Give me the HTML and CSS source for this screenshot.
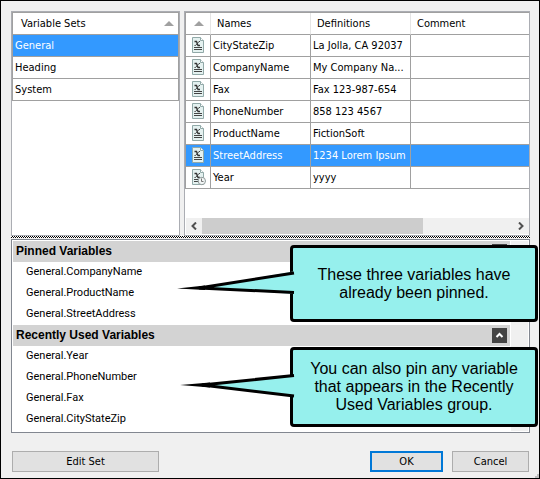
FILE: index.html
```html
<!DOCTYPE html>
<html lang="en">
<head>
<meta charset="utf-8">
<title>Variables</title>
<link rel="stylesheet" href="styles.css">
</head>
<body>
<svg class="symbols" aria-hidden="true">
  <symbol id="doc" viewBox="0 0 12 17">
    <path d="M.5.5h8l3 3v12H.5z" fill="#e4f1f0" stroke="#91a9a8"/>
    <path d="M8.500.5v3h3" fill="#fff" stroke="#91a9a8"/>
    <path d="M2.500 4.500h2l1.500 4h2" fill="none" stroke="#333" stroke-width="1.300"/>
    <path d="M8 4.500H7L3.500 8.500h-1" fill="none" stroke="#444"/>
    <path d="M2 10.500h8M2 12.500h8" stroke="#444"/>
  </symbol>
  <symbol id="doc-clock" viewBox="0 0 14 17">
    <use href="#doc" width="12" height="17"/>
    <circle cx="9.800" cy="12" r="3.700" fill="#f1f5f5" stroke="#8e9999"/>
    <path d="M9.500 9.500v3h2" fill="none" stroke="#777"/>
  </symbol>
</svg>
<main class="dialog">
  <div class="panes">
    <section class="pane">
      <table class="grid sets">
        <thead><tr><th><span class="sorted">Variable Sets <i class="sort"></i></span></th></tr></thead>
        <tbody>
          <tr class="selected"><td>General</td></tr>
          <tr><td>Heading</td></tr>
          <tr><td>System</td></tr>
        </tbody>
      </table>
    </section>
    <section class="pane">
      <table class="grid vars">
        <colgroup><col class="col-icon"><col class="col-text"><col class="col-text"><col></colgroup>
        <thead><tr><th class="icon-head"><i class="sort"></i></th><th>Names</th><th>Definitions</th><th>Comment</th></tr></thead>
        <tbody>
          <tr><td class="icon"><svg class="doc"><use href="#doc"/></svg></td><td>CityStateZip</td><td>La Jolla, CA 92037</td><td></td></tr>
          <tr><td class="icon"><svg class="doc"><use href="#doc"/></svg></td><td>CompanyName</td><td>My Company Na...</td><td></td></tr>
          <tr><td class="icon"><svg class="doc"><use href="#doc"/></svg></td><td>Fax</td><td>Fax 123-987-654</td><td></td></tr>
          <tr><td class="icon"><svg class="doc"><use href="#doc"/></svg></td><td>PhoneNumber</td><td>858 123 4567</td><td></td></tr>
          <tr><td class="icon"><svg class="doc"><use href="#doc"/></svg></td><td>ProductName</td><td>FictionSoft</td><td></td></tr>
          <tr class="selected"><td class="icon"><svg class="doc"><use href="#doc"/></svg></td><td>StreetAddress</td><td>1234 Lorem Ipsum</td><td></td></tr>
          <tr><td class="icon"><svg><use href="#doc-clock"/></svg></td><td>Year</td><td>yyyy</td><td></td></tr>
        </tbody>
      </table>
      <div class="hscroll">
        <button class="arrow" aria-label="Scroll left"><svg viewBox="0 0 8 8"><path d="M6 .5L2.500 4 6 7.500"/></svg></button>
        <div class="track"><div class="thumb"></div></div>
        <button class="arrow" aria-label="Scroll right"><svg viewBox="0 0 8 8"><path d="M2 .5L5.500 4 2 7.500"/></svg></button>
      </div>
    </section>
  </div>
  <div class="splitter"></div>
  <section class="quick">
    <div class="groups">
      <header class="group-head"><h2>Pinned Variables</h2><button class="fold" aria-label="Collapse pinned"><svg viewBox="0 0 15 15"><path d="M4.500 9l3-3 3 3"/></svg></button></header>
      <ul>
        <li>General.CompanyName</li>
        <li>General.ProductName</li>
        <li>General.StreetAddress</li>
      </ul>
      <header class="group-head"><h2>Recently Used Variables</h2><button class="fold" aria-label="Collapse recent"><svg viewBox="0 0 15 15"><path d="M4.500 9l3-3 3 3"/></svg></button></header>
      <ul>
        <li>General.Year</li>
        <li>General.PhoneNumber</li>
        <li>General.Fax</li>
        <li>General.CityStateZip</li>
      </ul>
    </div>
    <div class="vscroll"></div>
    <aside class="callout pinned">
      <svg class="tail" viewBox="0 0 119 30"><path class="fill" d="M119 4L24 21l95 6z"/><path class="line" d="M117 6L22 21l95 4.500"/><path class="tip" d="M0 21.500L28 18.500v4.500z"/></svg>
      <p>These three variables have<br>already been pinned.</p>
    </aside>
    <aside class="callout recent">
      <svg class="tail" viewBox="0 0 116 30"><path class="fill" d="M116 4L24 14l92 12z"/><path class="line" d="M114 4.500L22 14l92 11"/><path class="tip" d="M0 14L30 11.500v5z"/></svg>
      <p>You can also pin any variable<br>that appears in the Recently<br>Used Variables group.</p>
    </aside>
  </section>
  <footer class="actions">
    <button class="btn edit">Edit Set</button>
    <button class="btn ok">OK</button>
    <button class="btn cancel">Cancel</button>
  </footer>
  <svg class="grip" viewBox="0 0 4 4"><path d="M2 0h2v4H0V2h2z"/></svg>
</main>
</body>
</html>
```
FILE: styles.css
```css
* { box-sizing: border-box; }
body { margin: 0; font: 11px/21px "DejaVu Sans Condensed", Roboto, sans-serif; color: #000; }
.symbols { position: absolute; width: 0; height: 0; }
.dialog {
  position: relative;
  display: flex;
  flex-direction: column;
  min-height: 100vh;
  padding: 10px 9px 6px 10px;
  border: 1px solid #000;
  background: #f0f0f0;
}

.panes { display: grid; grid-template-columns: 169px 1fr; gap: 4px; height: 225px; }
.pane { display: flex; flex-direction: column; min-width: 0; border: 1px solid #abadb3; background: #fff; }
.grid { width: 100%; table-layout: fixed; border-collapse: separate; border-spacing: 0; border: 1px solid #a0a0a0; border-width: 1px 0 0 1px; }
.sets { border-right-width: 1px; }
.col-icon { width: 25px; }
.col-text { width: 100px; }
.grid th, .grid td { height: 22px; padding: 0 2px; border-bottom: 1px solid #a0a0a0; white-space: nowrap; text-align: left; font-weight: normal; overflow: hidden; }
.grid th { padding: 0 3px 0 6px; }
.sets th { padding: 0 4px 0 8px; }
.vars td { border-right: 1px solid #a0a0a0; }
.vars th { border-right: 1px solid #e5e5e5; }
.vars td:last-child, .vars th:last-child { border-right: 0; }
.grid .selected td { background: #3399ff; color: #fff; }
.grid td.icon { padding: 0 0 0 6px; }
.icon svg { display: block; width: 14px; height: 17px; }
.icon .doc { width: 12px; }
.sorted { display: flex; align-items: center; justify-content: space-between; }
.sort { display: block; width: 0; border: solid transparent; border-width: 0 5px 5px; border-bottom-color: #a0a0a0; }
.grid th.icon-head { padding: 0 0 0 8px; }

.hscroll { display: flex; height: 17px; margin-top: auto; background: #f0f0f0; border: solid #fff; border-width: 0 0 1px 1px; }
.arrow { display: grid; place-items: center; width: 16px; padding: 0; border: 0; background: none; }
.arrow svg { width: 8px; height: 8px; }
.arrow path { fill: none; stroke: #505050; stroke-width: 2; }
.track { flex: 1; }
.thumb { width: 71%; height: 100%; background: #cdcdcd; }

.splitter { height: 2px; margin-bottom: 1px; background: repeating-conic-gradient(#000 0 25%, #fff 0 50%) 0 0 / 2px 2px; }

.quick { position: relative; display: flex; height: 194px; padding: 1px; border: 1px solid #828790; background: #fff; }
.groups { flex: 1; font-family: Roboto, sans-serif; }
.group-head { display: flex; align-items: center; justify-content: space-between; height: 21px; padding: 0 3px 0 3px; background: #d3d3d3; }
.group-head h2 { margin: 0; font: bold 12px/21px "Liberation Sans", sans-serif; }
.fold { width: 15px; height: 15px; padding: 0; border: 0; background: #444; }
.fold svg { display: block; width: 15px; height: 15px; }
.fold path { fill: none; stroke: #fff; stroke-width: 2; }
.groups ul { margin: 0; padding: 0 0 0 13px; list-style: none; }
.groups li { height: 21px; line-height: 19px; }
.vscroll { width: 17px; margin-left: 1px; background: #f0f0f0; }

.callout {
  position: absolute;
  right: -9px;
  display: grid;
  place-items: center;
  width: 248px;
  height: 77px;
  border: 3px solid #000;
  border-radius: 4px;
  background: #96f0ed;
  font: 16px/18px "Liberation Sans", sans-serif;
  text-align: center;
}
.callout p { margin: 0; white-space: nowrap; }
.pinned { top: 5px; }
.recent { top: 107px; height: 80px; }
.tail { position: absolute; right: 100%; height: 30px; margin-right: -3px; }
.pinned .tail { top: 19px; width: 119px; }
.recent .tail { top: 21px; width: 116px; }
.tail .fill { fill: #96f0ed; }
.tail .line { fill: none; stroke: #000; stroke-width: 3; }
.tail .tip { fill: #000; }

.actions { display: flex; gap: 9px; margin-top: 18px; padding: 0 1px 0 1px; }
.btn { height: 21px; padding: 0; border: 1px solid #adadad; background: #e1e1e1; color: #000; font: 11px/17px "DejaVu Sans Condensed", Roboto, sans-serif; }
.edit { width: 147px; margin-right: auto; }
.ok { width: 73px; border: 2px solid #0078d7; }
.cancel { width: 77px; }
.grip { position: absolute; right: 0; bottom: 0; width: 4px; height: 4px; fill: #bfbfbf; }
```
